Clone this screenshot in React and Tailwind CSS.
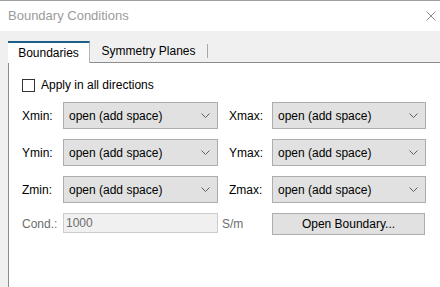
import { useState } from 'react';

const FONT = { fontFamily: '"Liberation Sans", Arial, sans-serif' };

function Chevron() {
  return (
    <svg width="9" height="6" viewBox="0 0 9 6" className="shrink-0">
      <path d="M0.5 0.5 L4.5 4.5 L8.5 0.5" fill="none" stroke="#606060" strokeWidth="1" />
    </svg>
  );
}

/** Windows-style combo box */
function Combo({ value, width }) {
  return (
    <div
      className={`h-[27px] ${width} flex items-center justify-between pl-[5px] pr-[7px] bg-[#e1e1e1] border border-[#adadad] text-[12px] text-black`}
    >
      <span>{value}</span>
      <Chevron />
    </div>
  );
}

function Row({ left, right }) {
  return (
    <div className="flex items-start">
      <span className="w-[41px] pt-[5px] text-[12px] text-black">{left}</span>
      <Combo value="open (add space)" width="w-[155px]" />
      <span className="w-[43px] ml-[11px] pt-[5px] text-[12px] text-black">{right}</span>
      <Combo value="open (add space)" width="w-[154px]" />
    </div>
  );
}

export default function App() {
  const [tab, setTab] = useState('boundaries');

  return (
    <div className="w-[440px] h-[287px] overflow-hidden flex flex-col bg-white border-t border-[#a0a0a0]" style={FONT}>
      {/* Title bar */}
      <div className="h-[30px] shrink-0 flex items-center justify-between pl-[8px] pr-[4px]">
        <span className="text-[13px] text-[#9b9b9b]">Boundary Conditions</span>
        <svg width="10" height="10" viewBox="0 0 10 10">
          <path d="M0.5 0.5 L9.5 9.5 M9.5 0.5 L0.5 9.5" stroke="#8a8a8a" strokeWidth="1" />
        </svg>
      </div>

      {/* Tab area */}
      <div className="flex-1 flex flex-col bg-[#f0f0f0] pl-[8px] pt-[9px]">
        <div className="flex items-end h-[22px] text-[12px] text-black">
          <button
            onClick={() => setTab('boundaries')}
            className="h-[22px] w-[82px] bg-white border-t-2 border-t-[#1d5f86] border-r border-r-[#b5b5b5] flex items-center justify-center relative z-10 -mb-px"
          >
            Boundaries
          </button>
          <button
            onClick={() => setTab('symmetry')}
            className="h-[22px] w-[117px] flex items-center justify-center"
          >
            Symmetry Planes
          </button>
          <span className="w-px h-[14px] bg-[#a8a8a8] mb-[4px]" />
        </div>

        {/* Panel */}
        <div className="flex-1 bg-white border-l border-t border-[#8c8c8c] pl-[13px] pt-[12px]">
          <label className="flex items-center gap-[6px] h-[20px] text-[12px] text-black">
            <span className="w-[13px] h-[13px] border border-[#333] bg-white" />
            Apply in all directions
          </label>

          <div className="mt-[7px] flex flex-col gap-[10px]">
            <Row left="Xmin:" right="Xmax:" />
            <Row left="Ymin:" right="Ymax:" />
            <Row left="Zmin:" right="Zmax:" />

            <div className="flex items-start">
              <span className="w-[41px] pt-[2px] text-[12px] text-[#6d6d6d]">Cond.:</span>
              <div className="w-[155px] h-[20px] flex items-center pl-[2px] bg-[#f0f0f0] border border-[#cccccc] text-[12px] text-[#6d6d6d]">
                1000
              </div>
              <span className="w-[43px] ml-[4px] pt-[2px] text-[12px] text-[#6d6d6d]">S/m</span>
              <button className="ml-[7px] w-[153px] h-[22px] bg-[#e1e1e1] border border-[#adadad] text-[12px] text-black flex items-center justify-center">
                Open Boundary...
              </button>
            </div>
          </div>
        </div>
      </div>
    </div>
  );
}
